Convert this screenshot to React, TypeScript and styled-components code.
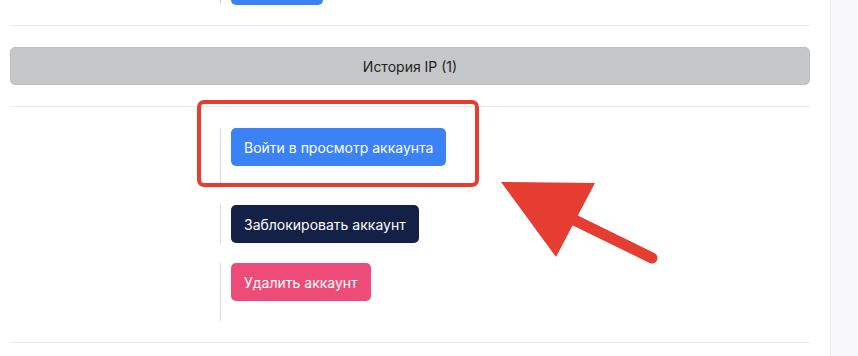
import React from 'react';
import styled, { createGlobalStyle } from 'styled-components';

const GlobalStyle = createGlobalStyle`
  html, body {
    margin: 0;
    padding: 0;
    background: #ffffff;
    overflow: hidden;
  }
  body {
    font-family: Inter, "Noto Sans", sans-serif;
  }
`;

const Page = styled.div`
  position: relative;
  display: flex;
  width: 858px;
  height: 356px;
  overflow: hidden;
`;

const Main = styled.div`
  flex: 1;
  padding: 0 20px 0 10px;
  background: #ffffff;
`;

const SidePanel = styled.div`
  width: 27px;
  background: #f8f8fa;
  border-left: 1px solid #ebeaf1;
`;

const Divider = styled.div<{ $top: number; $bottom: number }>`
  height: 1px;
  background: #ebebeb;
  margin: ${p => p.$top}px 0 ${p => p.$bottom}px;
`;

const HistoryBar = styled.button`
  display: block;
  width: 100%;
  height: 38px;
  background: #c6c7c9;
  border: 1px solid #bcbdbf;
  border-radius: 5px;
  color: #1d1f22;
  font-family: Inter, "Noto Sans", sans-serif;
  font-size: 14px;
  cursor: pointer;
`;

const Actions = styled.div`
  display: flex;
  flex-direction: column;
  gap: 20px;
  padding-left: 210px;
`;

const ActionRow = styled.div<{ $pad?: number; $shift?: number }>`
  display: flex;
  border-left: 1px solid #dadada;
  padding: 0 0 ${p => p.$pad ?? 0}px 10px;
  margin-top: ${p => p.$shift ?? 0}px;
`;

const tones = {
  primary: '#3b82f7',
  dark: '#142146',
  danger: '#ed4c78',
};

const ActionButton = styled.button<{ $tone: keyof typeof tones; $width?: number }>`
  height: 38px;
  width: ${p => (p.$width ? `${p.$width}px` : 'auto')};
  padding: 0 13px;
  border: none;
  border-radius: 5px;
  background: ${p => tones[p.$tone]};
  color: #ffffff;
  font-family: Inter, "Noto Sans", sans-serif;
  font-size: 14px;
  white-space: nowrap;
  cursor: pointer;
`;

const Highlight = styled.div`
  position: absolute;
  left: 197px;
  top: 100px;
  width: 274px;
  height: 79px;
  border: 4px solid #e53d31;
  border-radius: 7px;
  pointer-events: none;
`;

const Pointer = styled.svg`
  position: absolute;
  left: 0;
  top: 0;
  pointer-events: none;
`;

export default function App() {
  return (
    <>
      <GlobalStyle />
      <Page>
        <Main>
          <Actions>
            <ActionRow $shift={-33}>
              <ActionButton $tone="primary" $width={92} aria-label="Сохранить" />
            </ActionRow>
          </Actions>
          <Divider $top={20} $bottom={21} />
          <HistoryBar>История IP (1)</HistoryBar>
          <Divider $top={21} $bottom={21} />
          <Actions>
            <ActionRow $pad={19}>
              <ActionButton $tone="primary">Войти в просмотр аккаунта</ActionButton>
            </ActionRow>
            <ActionRow>
              <ActionButton $tone="dark">Заблокировать аккаунт</ActionButton>
            </ActionRow>
            <ActionRow $pad={20}>
              <ActionButton $tone="danger">Удалить аккаунт</ActionButton>
            </ActionRow>
          </Actions>
          <Divider $top={21} $bottom={0} />
        </Main>
        <SidePanel />
        <Highlight />
        <Pointer width="858" height="356" viewBox="0 0 858 356">
          <polygon points="501,182 595,183 556,257" fill="#e53d31" />
          <line
            x1="560"
            y1="213"
            x2="652"
            y2="258"
            stroke="#e53d31"
            strokeWidth="11"
            strokeLinecap="round"
          />
        </Pointer>
      </Page>
    </>
  );
}
